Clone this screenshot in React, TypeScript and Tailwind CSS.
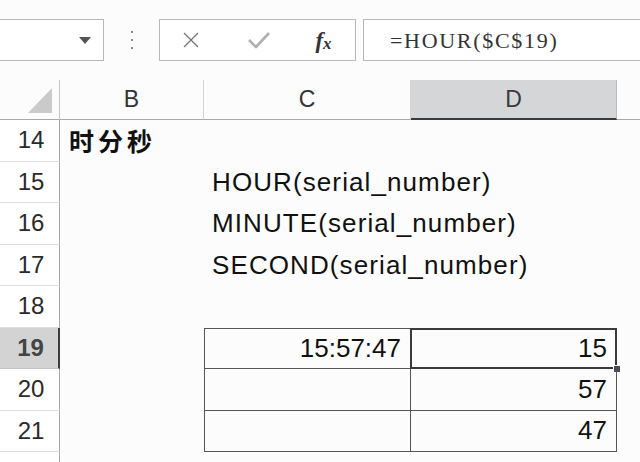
import React from "react";

const rows = [14, 15, 16, 17, 18, 19, 20, 21, 22];

export default function App() {
  return (
    <div className="w-[640px] h-[462px] overflow-hidden bg-[#fcfcfd] font-['Liberation_Sans',Arial,sans-serif] text-[#111]">
      {/* Formula bar */}
      <div className="h-[80px] pt-[19px] flex items-start">
        <div className="w-[104px] h-[42px] border border-l-0 border-[#b8b8b8] bg-white flex items-center justify-end pr-[12px]">
          <svg width="12" height="7" viewBox="0 0 12 7">
            <polygon points="0,0 12,0 6,7" fill="#555" />
          </svg>
        </div>
        <div className="w-[55px] h-[42px] flex flex-col items-center justify-center gap-[6px]">
          <div className="w-[2px] h-[2px] bg-[#666] rounded-full" />
          <div className="w-[2px] h-[2px] bg-[#666] rounded-full" />
          <div className="w-[2px] h-[2px] bg-[#666] rounded-full" />
        </div>
        <div className="w-[197px] h-[42px] border border-[#b8b8b8] bg-white flex items-center">
          <div className="w-[62px] flex justify-center">
            <svg width="18" height="16" viewBox="0 0 18 16">
              <path d="M2 1 L16 15 M16 1 L2 15" stroke="#777" strokeWidth="1.4" fill="none" />
            </svg>
          </div>
          <div className="w-[74px] flex justify-center">
            <svg width="24" height="18" viewBox="0 0 24 18">
              <path d="M2 9 L9 16 L22 2" stroke="#b0b0b0" strokeWidth="2.6" fill="none" strokeLinejoin="round" />
            </svg>
          </div>
          <div className="flex-1 flex justify-center pr-[4px] font-['Liberation_Serif',serif] italic font-bold text-[#333] leading-none">
            <span className="text-[23px]">f</span>
            <span className="text-[17px] mt-[6px]">x</span>
          </div>
        </div>
        <div className="ml-[7px] flex-1 h-[42px] border border-r-0 border-[#b8b8b8] bg-white flex items-center pl-[26px] font-['Liberation_Serif',serif] text-[22px] tracking-[1.7px] text-[#333]">
          =HOUR($C$19)
        </div>
      </div>

      {/* Grid */}
      <div className="grid grid-cols-[60px_144px_207px_206px_1fr] grid-rows-[40px_repeat(9,41.5px)]">
        {/* header */}
        <div className="border-r border-[#c6c6c6] border-b border-b-[#a8a8a8] flex items-end justify-end pr-[7px] pb-[6px]">
          <svg width="24" height="25" viewBox="0 0 24 25">
            <polygon points="24,0 24,25 0,25" fill="#cacaca" />
          </svg>
        </div>
        <div className="border-r border-[#d4d4d4] border-b border-b-[#a8a8a8] flex items-center justify-center text-[23px] text-[#333]">B</div>
        <div className="border-r border-[#d4d4d4] border-b border-b-[#a8a8a8] flex items-center justify-center text-[23px] text-[#333]">C</div>
        <div className="border-r border-[#bdbdbd] border-b-2 border-b-[#3a3a3a] bg-[#d5d6d8] flex items-center justify-center text-[23px] text-[#3a3a3a] pt-[1px]">D</div>
        <div className="border-b border-b-[#a8a8a8]" />

        {rows.map((r) => {
          const sel = r === 19;
          return (
            <React.Fragment key={r}>
              <div
                className={
                  sel
                    ? "bg-[#d3d3d3] border-r-2 border-r-[#3c3c3c] border-b border-b-[#c4c4c4] flex items-center justify-center pl-[3px] text-[24px] font-bold text-[#444]"
                    : "bg-white border-r border-r-[#a8a8a8] border-b border-b-[#dedede] flex items-center justify-center pl-[3px] text-[24px] text-[#2a2a2a]"
                }
              >
                {r < 22 ? r : ""}
              </div>
              {/* B */}
              <div className="flex items-center pl-[9px]">
                {r === 14 && (
                  <span className="font-['Noto_Sans_CJK_SC',sans-serif] font-bold text-[25px] tracking-[4px] text-[#111]">时分秒</span>
                )}
              </div>
              {/* C */}
              <div
                className={
                  r >= 19 && r <= 21
                    ? `flex items-center justify-end pr-[9px] text-[26px] border-l border-r border-b border-[#555] ${sel ? "border-t" : ""}`
                    : "flex items-center pl-[8px] text-[26px] tracking-[1.1px] whitespace-nowrap"
                }
              >
                {r === 15 && "HOUR(serial_number)"}
                {r === 16 && "MINUTE(serial_number)"}
                {r === 17 && "SECOND(serial_number)"}
                {r === 19 && "15:57:47"}
              </div>
              {/* D */}
              <div
                className={
                  r >= 19 && r <= 21
                    ? `relative flex items-center justify-end pr-[9px] text-[26px] border-r border-b border-[#555] ${sel ? "border-t" : ""}`
                    : ""
                }
              >
                {r === 19 && "15"}
                {r === 20 && "57"}
                {r === 21 && "47"}
                {sel && (
                  <>
                    <div className="absolute -left-[1px] -top-[1px] -right-[1px] -bottom-[1px] border-2 border-[#3a3a3a]" />
                    <div className="absolute -right-[5px] -bottom-[5px] w-[8px] h-[8px] bg-[#4a4a55] border border-white" />
                  </>
                )}
              </div>
              <div />
            </React.Fragment>
          );
        })}
      </div>
    </div>
  );
}
